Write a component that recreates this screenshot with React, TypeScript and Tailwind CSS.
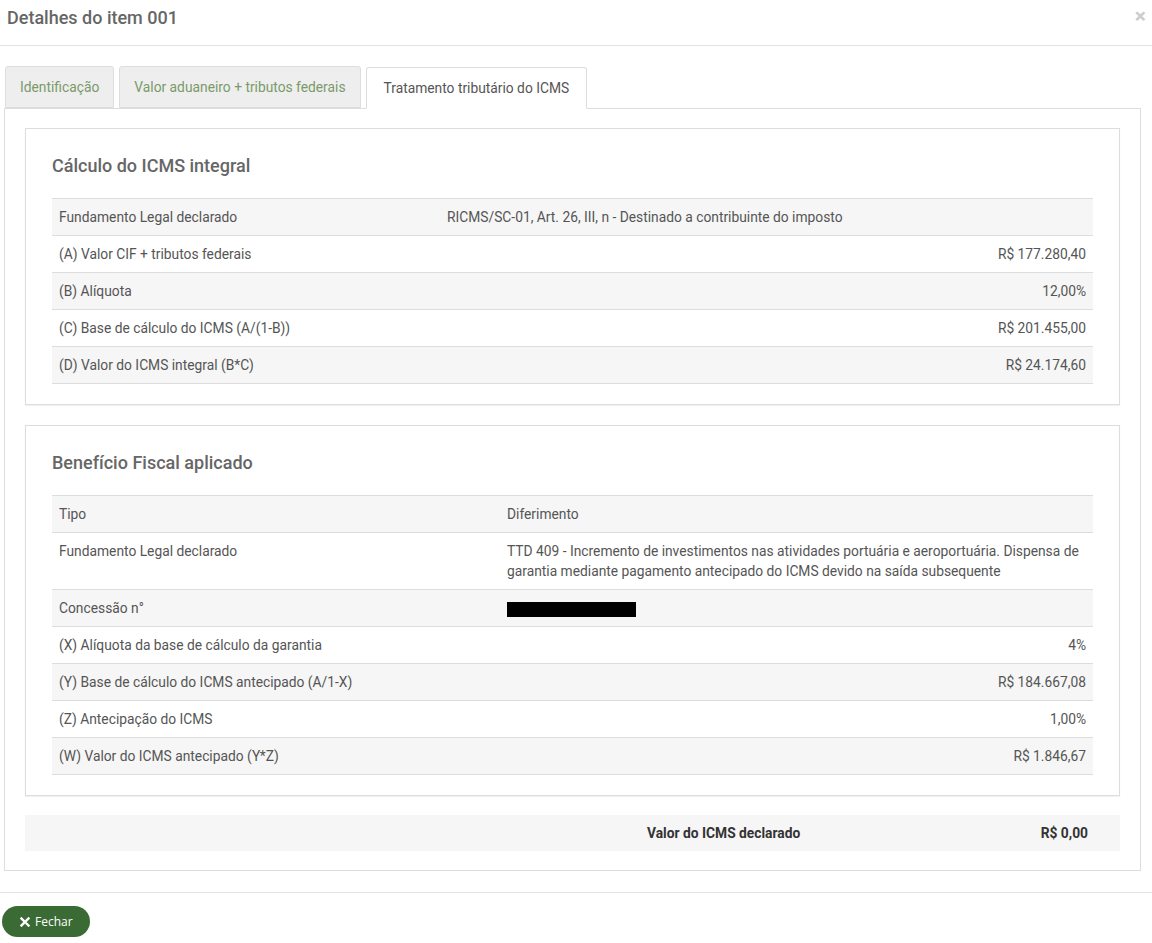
import React from "react";

type Row = { label: string; value?: React.ReactNode; right?: boolean };

const integral: Row[] = [
  { label: "Fundamento Legal declarado", value: "RICMS/SC-01, Art. 26, III, n - Destinado a contribuinte do imposto" },
  { label: "(A) Valor CIF + tributos federais", value: "R$ 177.280,40", right: true },
  { label: "(B) Alíquota", value: "12,00%", right: true },
  { label: "(C) Base de cálculo do ICMS (A/(1-B))", value: "R$ 201.455,00", right: true },
  { label: "(D) Valor do ICMS integral (B*C)", value: "R$ 24.174,60", right: true },
];

const beneficio: Row[] = [
  { label: "Tipo", value: "Diferimento" },
  {
    label: "Fundamento Legal declarado",
    value:
      "TTD 409 - Incremento de investimentos nas atividades portuária e aeroportuária. Dispensa de garantia mediante pagamento antecipado do ICMS devido na saída subsequente",
  },
  { label: "Concessão n°", value: <span className="inline-block h-[15px] w-[129px] bg-black align-middle" /> },
  { label: "(X) Alíquota da base de cálculo da garantia", value: "4%", right: true },
  { label: "(Y) Base de cálculo do ICMS antecipado (A/1-X)", value: "R$ 184.667,08", right: true },
  { label: "(Z) Antecipação do ICMS", value: "1,00%", right: true },
  { label: "(W) Valor do ICMS antecipado (Y*Z)", value: "R$ 1.846,67", right: true },
];

function DataTable({ rows, labelWidth }: { rows: Row[]; labelWidth: string }) {
  return (
    <div className="mx-[26px] border-b border-[#ddd]">
      {rows.map((r, i) => (
        <div
          key={i}
          className={
            "flex border-t border-[#ddd] px-[7px] py-[8px] leading-[20px] " +
            (i % 2 === 0 ? "bg-[#f6f6f6]" : "bg-white")
          }
        >
          {r.right ? (
            <>
              <div className="flex-1">{r.label}</div>
              <div className="text-right">{r.value}</div>
            </>
          ) : (
            <>
              <div className={labelWidth + " shrink-0"}>{r.label}</div>
              <div className="flex-1">{r.value}</div>
            </>
          )}
        </div>
      ))}
    </div>
  );
}

function Card({ title, children }: { title: string; children: React.ReactNode }) {
  return (
    <div className="border border-[#ddd] bg-white pb-[20px] shadow-[0_1px_1px_rgba(0,0,0,0.05)]">
      <h3 className="px-[26px] pt-[25px] pb-[20px] text-[18px] font-medium leading-[24px] text-[#666]">{title}</h3>
      {children}
    </div>
  );
}

export default function App() {
  return (
    <div className="min-h-screen bg-white text-[13.8px] text-[#555]" style={{ fontFamily: "Roboto, 'Liberation Sans', sans-serif" }}>
      {/* header */}
      <div className="flex items-center justify-between border-b border-[#e3e3e3] pl-[7px] pr-[6px] pt-[5px] pb-[14px]">
        <h2 className="text-[18px] font-medium leading-[26px] text-[#666]">Detalhes do item 001</h2>
        <span className="-mt-[4px] text-[21px] leading-none font-bold text-[#ccc]">×</span>
      </div>

      <div className="pl-[4px] pr-[11px] pt-[20px]">
        {/* tabs */}
        <div className="flex items-end gap-[5px] pl-[1px]">
          <div className="rounded-t-[3px] border border-[#ddd] bg-[#eee] px-[14px] py-[10px] leading-[20px] text-[#7a9a6a]">Identificação</div>
          <div className="rounded-t-[3px] border border-[#ddd] bg-[#eee] px-[14px] py-[10px] leading-[20px] text-[#7a9a6a]">Valor aduaneiro + tributos federais</div>
          <div className="-mb-px rounded-t-[3px] border border-b-white border-[#ddd] bg-white px-[17px] pt-[10px] pb-[10px] leading-[20px] text-[#555]">Tratamento tributário do ICMS</div>
        </div>

        {/* tab panel */}
        <div className="border border-[#ddd] px-[20px] pt-[19px] pb-[19px]">
          <Card title="Cálculo do ICMS integral">
            <DataTable rows={integral} labelWidth="w-[388px]" />
          </Card>

          <div className="h-[20px]" />

          <Card title="Benefício Fiscal aplicado">
            <DataTable rows={beneficio} labelWidth="w-[448px]" />
          </Card>

          <div className="mt-[19px] flex bg-[#f6f6f6] py-[8px] pr-[32px] font-bold leading-[20px] text-[#333]">
            <div className="w-[622px] shrink-0" />
            <div className="flex-1">Valor do ICMS declarado</div>
            <div>R$ 0,00</div>
          </div>
        </div>
      </div>

      {/* footer */}
      <div className="mt-[21px] border-t border-[#e3e3e3] pl-[2px] pt-[13px]">
        <button
          className="flex h-[31px] items-center gap-[5px] rounded-full bg-[#3b6b35] pl-[18px] pr-[17px] text-[12px] text-white"
          style={{ fontFamily: "'Open Sans', 'Liberation Sans', sans-serif" }}
        >
          <svg width="10" height="10" viewBox="0 0 10 10">
            <path d="M1.5 1.5 L8.5 8.5 M8.5 1.5 L1.5 8.5" stroke="white" strokeWidth="2.4" strokeLinecap="square" />
          </svg>
          Fechar
        </button>
      </div>
    </div>
  );
}
